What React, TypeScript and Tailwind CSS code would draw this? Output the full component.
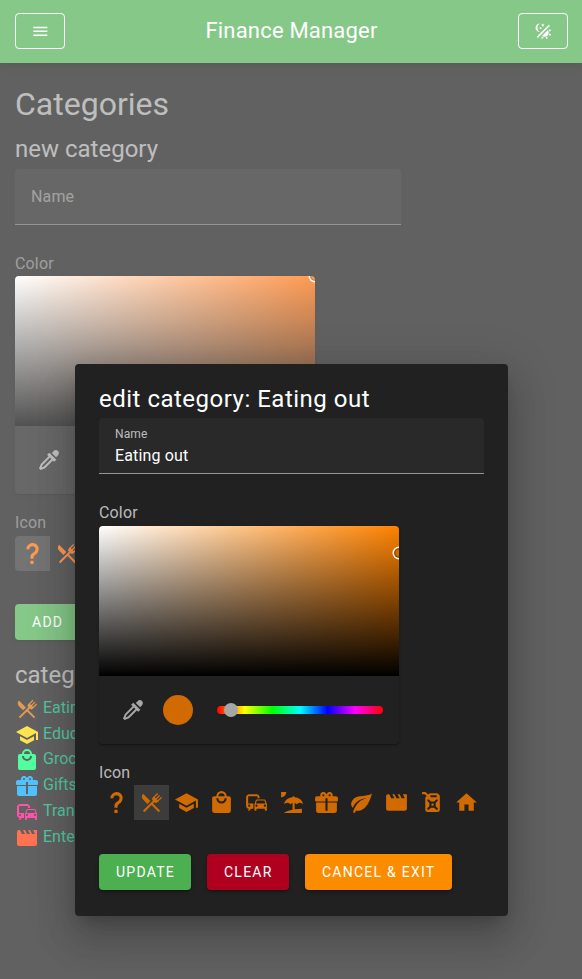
import React from "react";

const ICONS = {
  menu: "M3,6H21V8H3V6M3,11H21V13H3V11M3,16H21V18H3V16Z",
  theme:
    "M7.5,2C5.71,3.15 4.5,5.18 4.5,7.5C4.5,9.82 5.71,11.85 7.53,13C4.46,13 2,10.54 2,7.5A5.5,5.5 0 0,1 7.5,2M19.07,3.5L20.5,4.93L4.93,20.5L3.5,19.07L19.07,3.5M12.89,5.93L11.41,5L9.97,6L10.39,4.3L9,3.24L10.75,3.12L11.33,1.47L12,3.1L13.73,3.13L12.38,4.26L12.89,5.93M9.59,9.54L8.43,8.81L7.31,9.59L7.65,8.27L6.56,7.44L7.92,7.35L8.37,6.06L8.88,7.33L10.24,7.36L9.19,8.23L9.59,9.54M19,13.5A5.5,5.5 0 0,1 13.5,19C12.28,19 11.15,18.6 10.24,17.93L17.93,10.24C18.6,11.15 19,12.28 19,13.5M14.6,20.08L17.37,18.93L17.13,22.28L14.6,20.08M18.93,17.38L20.08,14.61L22.28,17.15L18.93,17.38M20.08,12.42L18.94,9.64L22.28,9.88L20.08,12.42M9.63,18.93L12.4,20.08L9.87,22.27L9.63,18.93Z",
  eyedropper:
    "M19.35,11.72L17.22,13.85L15.81,12.43L8.1,20.14L3.5,22L2,20.5L3.86,15.9L11.57,8.19L10.15,6.78L12.28,4.65L19.35,11.72M16.76,3C17.93,1.83 19.83,1.83 21,3C22.17,4.17 22.17,6.07 21,7.24L19.08,9.16L14.84,4.92L16.76,3M5.56,17.03L4.5,19.5L6.97,18.44L14.4,11L13,9.6L5.56,17.03Z",
  help: "M10,19H13V22H10V19M12,2C17.35,2.22 19.68,7.62 16.5,11.67C15.67,12.67 14.33,13.33 13.67,14.17C13,15 13,16 13,17H10C10,15.33 10,13.92 10.67,12.92C11.33,11.92 12.67,11.33 13.5,10.67C15.92,8.43 15.32,5.26 12,5A3,3 0 0,0 9,8H6A6,6 0 0,1 12,2Z",
  silverware:
    "M8.1,13.34L3.91,9.16C2.35,7.59 2.35,5.06 3.91,3.5L10.93,10.5L8.1,13.34M13.41,13L20.29,19.88L18.88,21.29L12,14.41L5.12,21.29L3.71,19.88L13.36,10.22L13.16,10C12.38,9.23 12.38,7.97 13.16,7.19L17.5,2.82L18.43,3.74L15.19,7L16.15,7.94L19.39,4.69L20.31,5.61L17.06,8.85L18,9.81L21.26,6.56L22.18,7.5L17.81,11.84C17.03,12.62 15.77,12.62 15,11.84L14.78,11.64L13.41,13Z",
  school: "M12,3L1,9L12,15L21,10.09V17H23V9M5,13.18V17.18L12,21L19,17.18V13.18L12,17L5,13.18Z",
  shopping:
    "M12,13A5,5 0 0,1 7,8H9A3,3 0 0,0 12,11A3,3 0 0,0 15,8H17A5,5 0 0,1 12,13M12,3A3,3 0 0,1 15,6H9A3,3 0 0,1 12,3M19,6H17A5,5 0 0,0 12,1A5,5 0 0,0 7,6H5C3.89,6 3,6.89 3,8V20A2,2 0 0,0 5,22H19A2,2 0 0,0 21,20V8C21,6.89 20.1,6 19,6Z",
  commute:
    "M12 4H5C3.34 4 2 5.34 2 7v8c0 1.66 1.34 3 3 3l-1 1v1h1l2-2.03L9 18v-5H4V5.98L13 6v2h2V7c0-1.66-1.34-3-3-3zM5 14c.55 0 1 .45 1 1s-.45 1-1 1-1-.45-1-1 .45-1 1-1zm15.57-4.34c-.14-.4-.52-.66-.97-.66h-7.19c-.46 0-.83.26-.98.66L10 13.77l.01 5.51c0 .38.31.72.69.72h.62c.38 0 .68-.38.68-.76V18h8v1.24c0 .38.31.76.69.76h.61c.38 0 .69-.34.69-.72l.01-1.37v-4.14l-1.43-4.11zm-8.16.34h7.19l1.03 3h-9.25l1.03-3zM12 16c-.55 0-1-.45-1-1s.45-1 1-1 1 .45 1 1-.45 1-1 1zm8 0c-.55 0-1-.45-1-1s.45-1 1-1 1 .45 1 1-.45 1-1 1z",
  beach:
    "M15,18.54C17.13,18.21 19.5,18 22,18V22H5C5,21.35 8.2,19.86 13,18.9V12.4C12.16,12.65 11.45,13.21 11,13.95C10.39,12.93 9.27,12.25 8,12.25C6.73,12.25 5.61,12.93 5,13.95C5.03,10.37 8.5,7.43 13,7.04V7A1,1 0 0,1 14,6A1,1 0 0,1 15,7V7.04C19.5,7.43 22.96,10.37 23,13.95C22.39,12.93 21.27,12.25 20,12.25C18.73,12.25 17.61,12.93 17,13.95C16.55,13.21 15.84,12.65 15,12.39V18.54M7,2A5,5 0 0,1 2,7V2H7Z",
  gift: "M9.06,1.93C7.17,1.92 5.33,3.74 6.17,6H3A2,2 0 0,0 1,8V10A1,1 0 0,0 2,11H11V8H13V11H22A1,1 0 0,0 23,10V8A2,2 0 0,0 21,6H17.83C19,2.73 14.6,0.42 12.57,3.24L12,4L11.43,3.22C10.8,2.33 9.93,1.94 9.06,1.93M9,4C9.89,4 10.34,5.08 9.71,5.71C9.08,6.34 8,5.89 8,5A1,1 0 0,1 9,4M15,4C15.89,4 16.34,5.08 15.71,5.71C15.08,6.34 14,5.89 14,5A1,1 0 0,1 15,4M2,12V20A2,2 0 0,0 4,22H20A2,2 0 0,0 22,20V12H13V20H11V12H2Z",
  leaf: "M17,8C8,10 5.9,16.17 3.82,21.34L5.71,22L6.66,19.7C7.14,19.87 7.64,20 8,20C19,20 22,3 22,3C21,5 14,5.25 9,6.25C4,7.25 2,11.5 2,13.5C2,15.5 3.75,17.25 3.75,17.25C7,8 17,8 17,8Z",
  movie:
    "M18,4L20,8H17L15,4H13L15,8H12L10,4H8L10,8H7L5,4H4A2,2 0 0,0 2,6V18A2,2 0 0,0 4,20H20A2,2 0 0,0 22,18V4H18Z",
  fuel: "M3,2H6C6.28,2 6.53,2.11 6.71,2.29L8.79,4.38L9.59,3.59C10,3.2 10.5,3 11,3H17C17.5,3 18,3.2 18.41,3.59L19.41,4.59C19.8,5 20,5.5 20,6V19A2,2 0 0,1 18,21H8A2,2 0 0,1 6,19V13L6,12V8C6,7.5 6.2,7 6.59,6.59L7.38,5.79L5.59,4H3V2M11,5V7H17V5H11M11.41,11L9.41,9H8V10.41L10,12.41V15.59L8,17.59V19H9.41L11.41,17H14.59L16.59,19H18V17.59L16,15.59V12.41L18,10.41V9H16.59L14.59,11H11.41M12,13H14V15H12V13Z",
  home: "M10,20V14H14V20H19V12H22L12,3L2,12H5V20H10Z",
};

type IconName = keyof typeof ICONS;

const PICKER_ICONS: IconName[] = [
  "help", "silverware", "school", "shopping", "commute", "beach", "gift", "leaf", "movie", "fuel", "home",
];

const CATEGORIES: { name: string; icon: IconName; color: string }[] = [
  { name: "Eating out", icon: "silverware", color: "text-[#d16a00]" },
  { name: "Education", icon: "school", color: "text-[#ffd800]" },
  { name: "Groceries", icon: "shopping", color: "text-[#00ff74]" },
  { name: "Gifts", icon: "gift", color: "text-[#00a6ff]" },
  { name: "Transport", icon: "commute", color: "text-[#ff0084]" },
  { name: "Entertainment", icon: "movie", color: "text-[#ff3000]" },
];

function Icon({ name, className }: { name: IconName; className: string }) {
  return (
    <svg viewBox="0 0 24 24" fill="currentColor" className={`shrink-0 ${className}`}>
      <path d={ICONS[name]} />
    </svg>
  );
}

function NameField({ value, width }: { value?: string; width: string }) {
  return (
    <div
      className={`flex h-14 flex-col rounded-t border-b bg-white/[0.04] px-4 ${width} ${
        value ? "border-white/50 pt-[9px]" : "justify-center border-white/30"
      }`}
    >
      {value ? (
        <>
          <span className="text-xs leading-[14px] tracking-[0.11px] text-white/70">Name</span>
          <span className="mt-[3px] text-base leading-6 tracking-[0.15px] text-white">{value}</span>
        </>
      ) : (
        <span className="text-base tracking-[0.15px] text-white/40">Name</span>
      )}
    </div>
  );
}

function ColorPicker({ hue, swatch, dot, thumb }: { hue: string; swatch: string; dot: string; thumb: string }) {
  return (
    <div className="w-[300px] overflow-hidden rounded bg-[#212121] shadow-[0_2px_1px_-1px_rgba(0,0,0,0.2),0_1px_1px_rgba(0,0,0,0.14),0_1px_3px_rgba(0,0,0,0.12)]">
      <div className={`relative h-[150px] overflow-hidden ${hue}`}>
        <div
          className={`absolute size-2.5 rounded-full shadow-[0_0_0_1.5px_white,inset_0_0_1px_1.5px_rgba(0,0,0,0.3)] ${dot}`}
        />
      </div>
      <div className="flex h-[68px] items-center pr-4 pl-[22px]">
        <Icon name="eyedropper" className="size-6 text-white/60" />
        <div className={`ml-[18px] size-[30px] rounded-full ${swatch}`} />
        <div className="relative ml-6 h-2 flex-1 rounded-full bg-[linear-gradient(to_right,#f00_0%,#ff0_16.66%,#0f0_33.33%,#0ff_50%,#00f_66.66%,#f0f_83.33%,#f00_100%)]">
          <div className={`absolute -top-[3px] size-3.5 rounded-full bg-[#a6a6a6] ${thumb}`} />
        </div>
      </div>
    </div>
  );
}

function IconPicker({ selected, color }: { selected: IconName; color: string }) {
  return (
    <div className={`flex h-[35px] w-[385px] overflow-hidden rounded ${color}`}>
      {PICKER_ICONS.map((name) => (
        <button
          key={name}
          className={`flex w-[35px] items-center justify-center ${name === selected ? "bg-white/[0.12]" : ""}`}
        >
          <Icon name={name} className="size-[25px]" />
        </button>
      ))}
    </div>
  );
}

function ActionButton({ label, className }: { label: string; className: string }) {
  return (
    <button
      className={`h-9 rounded pl-[17px] text-left text-sm tracking-[1.25px] whitespace-nowrap text-white shadow-[0_3px_1px_-2px_rgba(0,0,0,0.2),0_2px_2px_rgba(0,0,0,0.14),0_1px_5px_rgba(0,0,0,0.12)] ${className}`}
    >
      {label}
    </button>
  );
}

function EditDialog() {
  return (
    <section className="absolute top-[364px] left-[75px] h-[552px] w-[433px] rounded bg-[#212121] px-6 pt-[19px] text-white shadow-[0_11px_15px_-7px_rgba(0,0,0,0.2),0_24px_38px_3px_rgba(0,0,0,0.14),0_9px_46px_8px_rgba(0,0,0,0.12)]">
      <h2 className="mb-[3px] text-2xl leading-8 tracking-[0.5px] whitespace-nowrap">edit category: Eating out</h2>
      <NameField value="Eating out" width="w-[385px]" />
      <p className="mt-[27px] mb-px leading-6 tracking-[0.15px] text-white/70">Color</p>
      <ColorPicker
        hue="bg-[linear-gradient(to_top,#000,transparent),linear-gradient(to_right,#fff,#ff8200)]"
        swatch="bg-[#d16a00]"
        dot="top-[22px] left-[294.5px]"
        thumb="left-[7px]"
      />
      <p className="mt-[17px] leading-6 tracking-[0.15px] text-white/70">Icon</p>
      <IconPicker selected="silverware" color="text-[#d16a00]" />
      <div className="mt-[34px] flex gap-4">
        <ActionButton label="UPDATE" className="w-[92px] bg-[#4caf50]" />
        <ActionButton label="CLEAR" className="w-[82px] bg-[#b00020]" />
        <ActionButton label="CANCEL & EXIT" className="w-[147px] bg-[#fb8c00]" />
      </div>
    </section>
  );
}

export default function App() {
  return (
    <div className="relative h-[979px] w-full overflow-hidden bg-[#171717] font-['Roboto',sans-serif] text-base text-white">
      <header className="flex h-[63px] items-center justify-between bg-[#4caf50] pr-[14px] pb-px pl-[15px] shadow-[0_2px_4px_-1px_rgba(0,0,0,0.2),0_4px_5px_rgba(0,0,0,0.14),0_1px_10px_rgba(0,0,0,0.12)]">
        <button className="flex h-9 w-[50px] items-center justify-center rounded border border-white">
          <Icon name="menu" className="size-[18.67px]" />
        </button>
        <h1 className="-mt-0.5 text-[22px] tracking-[0.2px]">Finance Manager</h1>
        <button className="flex h-9 w-[50px] items-center justify-center rounded border border-white">
          <Icon name="theme" className="size-[18.67px]" />
        </button>
      </header>

      <main className="px-[15px] pt-[21px]">
        <h2 className="text-[32px] leading-10 text-white/60">Categories</h2>
        <h3 className="mt-[9px] mb-1 text-2xl leading-8 text-white/60">new category</h3>
        <NameField width="w-[386px]" />
        <p className="mt-[27px] leading-6 tracking-[0.15px] text-white/40">Color</p>
        <ColorPicker
          hue="bg-[linear-gradient(to_top,#000,transparent),linear-gradient(to_right,#fff,#ff6a00)]"
          swatch="bg-[#ff6a00]"
          dot="-top-[5px] left-[295px]"
          thumb="left-[4px]"
        />
        <p className="mt-[17px] mb-px leading-6 tracking-[0.15px] text-white/40">Icon</p>
        <IconPicker selected="help" color="text-[#ff6a00]" />
        <ActionButton label="ADD" className="mt-[33px] block w-[66px] bg-[#4caf50]" />
        <h3 className="mt-[19px] mb-[5px] text-2xl leading-8 text-white/60">categories</h3>
        <ul>
          {CATEGORIES.map(({ name, icon, color }) => (
            <li key={name} className="flex h-[25.75px] items-center gap-1 text-[#00ae74]">
              <Icon name={icon} className={`size-6 ${color}`} />
              <span className="-mt-0.5">{name}</span>
            </li>
          ))}
        </ul>
      </main>

      <div className="absolute inset-0 bg-white/[0.32]" />
      <EditDialog />
    </div>
  );
}
